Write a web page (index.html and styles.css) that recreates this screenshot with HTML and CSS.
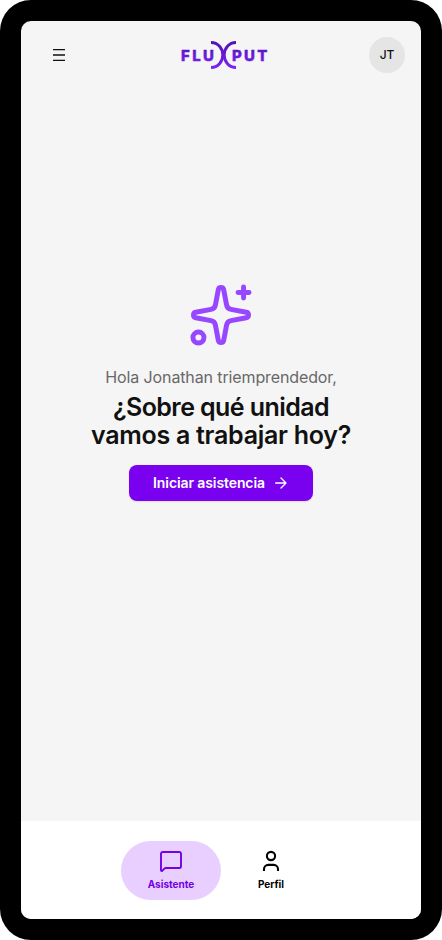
FILE: index.html
```html
<!DOCTYPE html>
<html lang="es">
<head>
<meta charset="utf-8">
<title>Fluxput</title>
<link rel="stylesheet" href="styles.css">
</head>
<body>
<div class="device">
  <div class="screen">
    <header class="topbar">
      <button class="menu" aria-label="Menú">
        <svg width="12" height="12" viewBox="0 0 12 12" stroke="#111" stroke-width="1.3"><path d="M0 .7h12M0 6h12M0 11.3h12"/></svg>
      </button>
      <svg class="logo" width="90" height="30" viewBox="0 0 90 30">
        <defs><linearGradient id="brand" gradientUnits="userSpaceOnUse" x1="0" y1="1" x2="0" y2="29"><stop offset="0" stop-color="#5110b5"/><stop offset="1" stop-color="#7c24f5"/></linearGradient></defs>
        <g fill="url(#brand)" stroke="url(#brand)" stroke-width=".4"><text x="1" y="21" textLength="33" lengthAdjust="spacing">FLU</text><text x="51.9" y="21" textLength="35.6" lengthAdjust="spacing">PUT</text></g>
        <g fill="none" stroke="url(#brand)" stroke-width="2.9"><path d="M31 2.5C38 2.5 42.8 8.5 42.8 15S38 27.5 31 27.5"/><path d="M56 2.5C49 2.5 44.2 8.5 44.2 15S49 27.5 56 27.5"/></g>
      </svg>
      <div class="avatar">JT</div>
    </header>
    <main class="welcome">
      <svg class="sparkles" width="66" height="66" viewBox="0 0 24 24" fill="none" stroke="#9747ff" stroke-width="1.8" stroke-linecap="round" stroke-linejoin="round"><path d="M11.017 2.814a1 1 0 0 1 1.966 0l1.051 5.558a2 2 0 0 0 1.594 1.594l5.558 1.051a1 1 0 0 1 0 1.966l-5.558 1.051a2 2 0 0 0-1.594 1.594l-1.051 5.558a1 1 0 0 1-1.966 0l-1.051-5.558a2 2 0 0 0-1.594-1.594l-5.558-1.051a1 1 0 0 1 0-1.966l5.558-1.051a2 2 0 0 0 1.594-1.594z"/><path d="M20.2 1.8v4M22.2 3.8h-4"/><circle cx="3.8" cy="20.2" r="2"/></svg>
      <p class="greeting">Hola Jonathan triemprendedor,</p>
      <h1 class="question"><span class="line-one">¿Sobre qué unidad</span><br><span class="line-two">vamos a trabajar hoy?</span></h1>
      <button class="start"><span>Iniciar asistencia</span>
        <svg width="16" height="16" viewBox="0 0 24 24" fill="none" stroke="#fff" stroke-width="2" stroke-linecap="round" stroke-linejoin="round"><path d="M4 12h15M12 4.5l7.5 7.5-7.5 7.5"/></svg>
      </button>
    </main>
    <nav class="tabs">
      <a class="tab active"><svg width="26" height="26" viewBox="0 0 26 26" fill="none" stroke="currentColor" stroke-width="1.9" stroke-linecap="round" stroke-linejoin="round"><path d="M4.9 4h16.3A1.8 1.8 0 0 1 23 5.8v12.4a1.8 1.8 0 0 1-1.8 1.8H7.8a2 2 0 0 0-1.4.6l-2.2 2.2a.7.7 0 0 1-1.2-.5V5.8A1.8 1.8 0 0 1 4.9 4z"/></svg><span>Asistente</span></a>
      <a class="tab profile"><svg width="26" height="26" viewBox="0 0 26 26" fill="none" stroke="currentColor" stroke-width="2.1" stroke-linejoin="round"><path d="M20 23v-1.9a4.2 4.2 0 0 0-4.2-4.2h-5.6A4.2 4.2 0 0 0 6 21.1V23"/><circle cx="13" cy="8" r="4.1"/></svg><span>Perfil</span></a>
    </nav>
  </div>
</div>
</body>
</html>
```
FILE: styles.css
```css
* { box-sizing: border-box; }
body { margin: 0; background: #fff; font-family: Inter, "Liberation Sans", sans-serif; color: #111; }
button { border: 0; padding: 0; background: none; font: inherit; }
.device { width: 442px; height: 940px; padding: 21px; background: #000; border-radius: 31px; }
.screen { height: 898px; display: flex; flex-direction: column; background: #f5f5f5; border-radius: 10px; overflow: hidden; }
.topbar { height: 68px; padding: 0 16px; display: grid; grid-template-columns: 44px 1fr 36px; align-items: center; }
.menu { width: 44px; height: 44px; display: flex; align-items: center; justify-content: center; }
.logo { justify-self: center; }
.logo text { font: 800 15px Inter, sans-serif; }
.avatar { width: 36px; height: 36px; border-radius: 50%; background: #e5e5e5; display: flex; align-items: center; justify-content: center; padding-bottom: 1px; font-size: 12px; font-weight: 500; }
.welcome { flex: 1; display: flex; flex-direction: column; align-items: center; padding-top: 193px; }
.sparkles { flex: none; }
.greeting { margin: 17px 0 0; font-size: 16px; line-height: 24px; letter-spacing: -.12px; color: #686868; white-space: nowrap; }
.question { margin: 4px 0 0; font-size: 25px; line-height: 28px; font-weight: 600; text-align: center; white-space: nowrap; }
.line-one { letter-spacing: -.58px; }
.line-two { letter-spacing: -.28px; }
.start { width: 184px; height: 36px; margin-top: 16px; padding-bottom: 1px; display: flex; align-items: center; justify-content: center; gap: 8px; border-radius: 8px; background: #7a00f0; color: #fff; font-size: 14px; font-weight: 600; letter-spacing: -.1px; box-shadow: 0 1px 2px rgba(0,0,0,.1); white-space: nowrap; }
.tabs { height: 98px; padding-top: 20px; display: flex; justify-content: center; background: #fff; }
.tab { width: 100px; height: 59px; padding-top: 7px; display: flex; flex-direction: column; align-items: center; border-radius: 30px; font-size: 10px; line-height: 14px; font-weight: 700; color: #000; }
.tab span { margin-top: 3px; }
.active { background: #e8cfff; color: #7300e6; }
```
